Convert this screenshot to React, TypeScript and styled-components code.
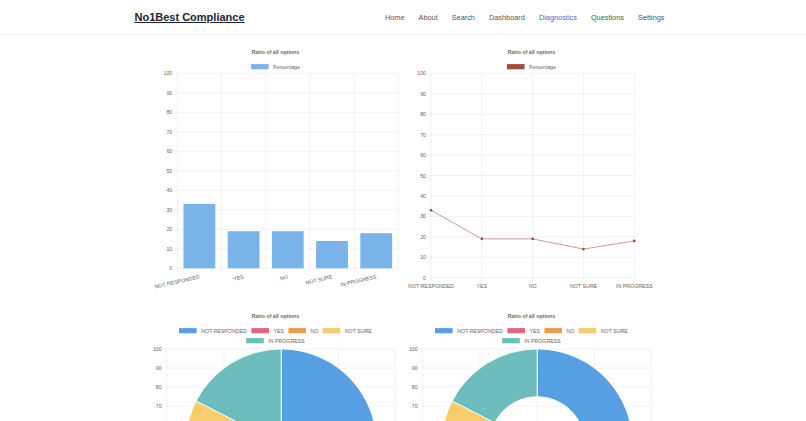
import React from 'react';
import styled, { createGlobalStyle } from 'styled-components';

const GlobalStyle = createGlobalStyle`
  body {
    margin: 0;
    background: #fff;
    font-family: "Liberation Sans", Arial, sans-serif;
  }
`;

const S = 0.44;
const FONT = 12;

const LABELS = ['NOT RESPONDED', 'YES', 'NO', 'NOT SURE', 'IN PROGRESS'];
const VALUES = [33, 19, 19, 14, 18];
const PIE_COLORS = ['#579fe3', '#e2667d', '#eb9c4c', '#f7cd6b', '#6cbdbb'];

// label widths in em (Arial metrics), used to centre the legend rows
const EM: Record<string, number> = {
  Percentage: 5.114,
  'NOT RESPONDED': 8.722,
  YES: 2.001,
  NO: 1.5,
  'NOT SURE': 5.167,
  'IN PROGRESS': 6.94,
};

const Navbar = styled.header`
  height: 34px;
  border-bottom: 1px solid #f1f1f1;
`;

const NavInner = styled.nav`
  width: 537px;
  height: 100%;
  margin: 0 auto;
  display: flex;
  align-items: center;
  justify-content: space-between;
`;

const Brand = styled.a`
  font-size: 11px;
  font-weight: 700;
  color: #212529;
  text-decoration: underline;
`;

const NavLinks = styled.ul`
  display: flex;
  list-style: none;
  margin: 0;
  padding: 0;
`;

const NavLink = styled.a<{ $active?: boolean }>`
  display: block;
  padding: 0 7px;
  font-size: 7.35px;
  color: ${({ $active }) => ($active ? '#3d72d6' : '#555')};
  text-decoration: none;
`;

const ChartGrid = styled.main`
  width: 512px;
  margin: 0 auto;
  display: grid;
  grid-template-columns: repeat(2, 256px);
  grid-auto-rows: 265px;
`;

const ChartCard = styled.section`
  svg {
    display: block;
    overflow: visible;
  }
`;

const ChartLabel = styled.text<{ $bold?: boolean }>`
  font-family: "Liberation Sans", Arial, sans-serif;
  font-size: ${FONT}px;
  font-weight: ${({ $bold }) => ($bold ? 700 : 400)};
  fill: #666;
`;

const GridLine = styled.line`
  stroke: #e8e8e8;
  stroke-width: 0.6;
`;

type TextProps = {
  x: number;
  y: number;
  anchor?: 'start' | 'middle' | 'end';
  rotate?: number;
  bold?: boolean;
  children: React.ReactNode;
};

const T = ({ x, y, anchor = 'middle', rotate = 0, bold, children }: TextProps) => (
  <ChartLabel
    $bold={bold}
    textAnchor={anchor}
    dominantBaseline="central"
    transform={`translate(${x} ${y}) rotate(${rotate}) scale(${S})`}
  >
    {children}
  </ChartLabel>
);

type LegendItem = { label: string; color: string };

const BOX = 40 * S;
const PAD = 10 * S;

const Legend = ({ rows, cx, ys }: { rows: LegendItem[][]; cx: number; ys: number[] }) => (
  <g>
    {rows.map((row, r) => {
      const widths = row.map((it) => BOX + PAD + EM[it.label] * FONT * S);
      const total = widths.reduce((a, b) => a + b, 0) + PAD * (row.length - 1);
      let x = cx - total / 2;
      return row.map((it, i) => {
        const x0 = x;
        x += widths[i] + PAD;
        return (
          <g key={it.label}>
            <rect x={x0} y={ys[r] - 2.6} width={BOX} height={5.2} fill={it.color} />
            <T x={x0 + BOX + PAD} y={ys[r]} anchor="start">
              {it.label}
            </T>
          </g>
        );
      });
    })}
  </g>
);

type Area = { left: number; right: number; top: number; bottom: number };

const YAxis = ({ a }: { a: Area }) => {
  const ticks = Array.from({ length: 11 }, (_, i) => i * 10);
  return (
    <g>
      {ticks.map((t) => {
        const y = a.bottom - (t / 100) * (a.bottom - a.top);
        return (
          <g key={t}>
            <GridLine x1={a.left - 3.5} x2={a.right} y1={y} y2={y} />
            <T x={a.left - 5} y={y} anchor="end">
              {t}
            </T>
          </g>
        );
      })}
    </g>
  );
};

const VGrid = ({ a, xs }: { a: Area; xs: number[] }) => (
  <g>
    {xs.map((x, i) => (
      <GridLine key={i} x1={x} x2={x} y1={a.top} y2={a.bottom + 3.5} />
    ))}
  </g>
);

const CX = 128.5;

const BarChart = () => {
  const a = { left: 30.3, right: 251.3, top: 38.3, bottom: 233.3 };
  const band = (a.right - a.left) / 5;
  const h = a.bottom - a.top;
  const bw = band * 0.72;
  return (
    <svg width={256} height={265}>
      <T x={CX} y={16.7} bold>
        Ratio of all options
      </T>
      <Legend rows={[[{ label: 'Percentage', color: '#7ab2ea' }]]} cx={CX} ys={[31.7]} />
      <VGrid a={a} xs={Array.from({ length: 6 }, (_, i) => a.left + i * band)} />
      <YAxis a={a} />
      {VALUES.map((v, i) => {
        const c = a.left + (i + 0.5) * band;
        const bh = (v / 100) * h;
        return <rect key={i} x={c - bw / 2} y={a.bottom - bh} width={bw} height={bh} fill="#7ab2ea" />;
      })}
      {LABELS.map((l, i) => (
        <T key={l} x={a.left + (i + 0.5) * band} y={241.5} anchor="end" rotate={-12.8}>
          {l}
        </T>
      ))}
    </svg>
  );
};

const LineChart = () => {
  const a = { left: 28, right: 231.3, top: 38.3, bottom: 242.7 };
  const step = (a.right - a.left) / 4;
  const pts = VALUES.map((v, i) => [a.left + i * step, a.bottom - (v / 100) * (a.bottom - a.top)]);
  return (
    <svg width={256} height={265}>
      <T x={CX} y={16.7} bold>
        Ratio of all options
      </T>
      <Legend rows={[[{ label: 'Percentage', color: '#a64a3f' }]]} cx={CX} ys={[31.7]} />
      <VGrid a={a} xs={pts.map((p) => p[0])} />
      <YAxis a={a} />
      <polyline points={pts.map((p) => p.join(',')).join(' ')} fill="none" stroke="#c67d73" strokeWidth={0.8} />
      {pts.map((p, i) => (
        <circle key={i} cx={p[0]} cy={p[1]} r={1.3} fill="#9e3f36" />
      ))}
      {LABELS.map((l, i) => (
        <T key={l} x={a.left + i * step} y={251}>
          {l}
        </T>
      ))}
    </svg>
  );
};

const slicePath = (cx: number, cy: number, r: number, ri: number, a0: number, a1: number) => {
  const p = (rad: number, ang: number) => `${cx + rad * Math.cos(ang)} ${cy + rad * Math.sin(ang)}`;
  const large = a1 - a0 > Math.PI ? 1 : 0;
  if (ri === 0) return `M ${cx} ${cy} L ${p(r, a0)} A ${r} ${r} 0 ${large} 1 ${p(r, a1)} Z`;
  return `M ${p(r, a0)} A ${r} ${r} 0 ${large} 1 ${p(r, a1)} L ${p(ri, a1)} A ${ri} ${ri} 0 ${large} 0 ${p(ri, a0)} Z`;
};

const PieChart = ({ cutout = 0 }: { cutout?: number }) => {
  const a = { left: 19.7, right: 248.7, top: 49, bottom: 240 };
  const step = (a.right - a.left) / 4;
  const cx = (a.left + a.right) / 2;
  const cy = (a.top + a.bottom) / 2;
  const r = (a.bottom - a.top) / 2;
  const total = VALUES.reduce((s, v) => s + v, 0);
  let ang = -Math.PI / 2;
  const items = LABELS.map((l, i) => ({ label: l, color: PIE_COLORS[i] }));
  return (
    <svg width={256} height={265}>
      <T x={CX} y={15.7} bold>
        Ratio of all options
      </T>
      <Legend rows={[items.slice(0, 4), items.slice(4)]} cx={CX} ys={[30.7, 40.7]} />
      <VGrid a={a} xs={Array.from({ length: 5 }, (_, i) => a.left + i * step)} />
      <YAxis a={a} />
      {VALUES.map((v, i) => {
        const a0 = ang;
        ang += (v / total) * Math.PI * 2;
        return (
          <path
            key={i}
            d={slicePath(cx, cy, r, r * cutout, a0, ang)}
            fill={PIE_COLORS[i]}
            stroke="#fff"
            strokeWidth={0.9}
          />
        );
      })}
    </svg>
  );
};

const NAV = ['Home', 'About', 'Search', 'Dashboard', 'Diagnostics', 'Questions', 'Settings'];

export default function App() {
  return (
    <>
      <GlobalStyle />
      <Navbar>
        <NavInner>
          <Brand href="#">No1Best Compliance</Brand>
          <NavLinks>
            {NAV.map((n) => (
              <li key={n}>
                <NavLink href="#" $active={n === 'Diagnostics'}>
                  {n}
                </NavLink>
              </li>
            ))}
          </NavLinks>
        </NavInner>
      </Navbar>
      <ChartGrid>
        <ChartCard>
          <BarChart />
        </ChartCard>
        <ChartCard>
          <LineChart />
        </ChartCard>
        <ChartCard>
          <PieChart />
        </ChartCard>
        <ChartCard>
          <PieChart cutout={0.5} />
        </ChartCard>
      </ChartGrid>
    </>
  );
}
